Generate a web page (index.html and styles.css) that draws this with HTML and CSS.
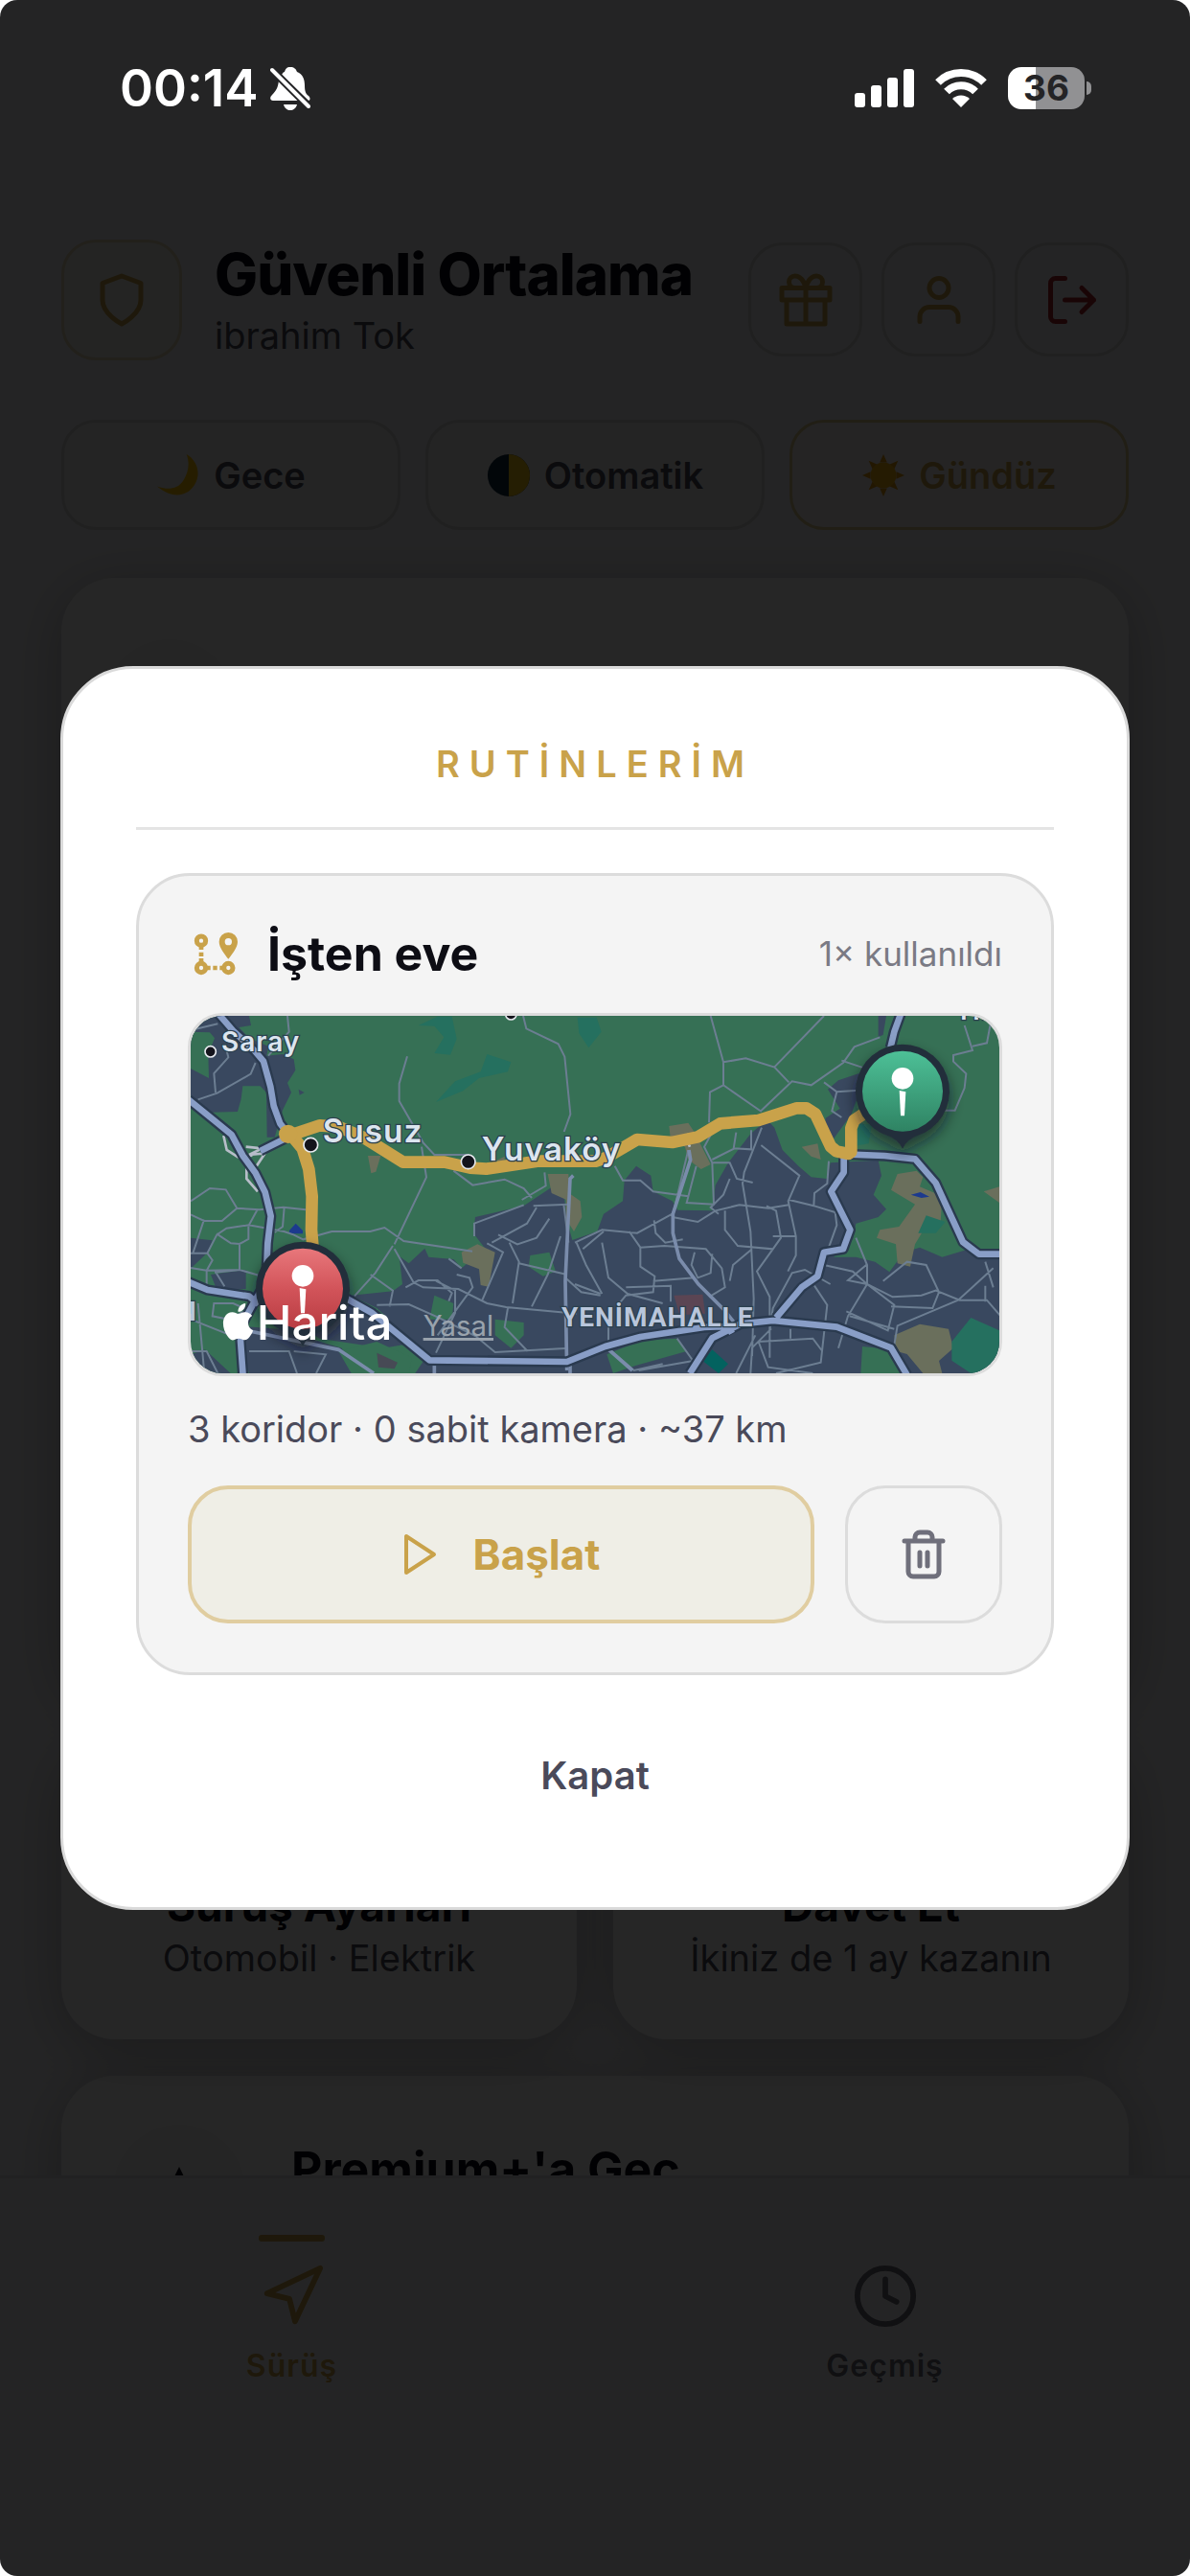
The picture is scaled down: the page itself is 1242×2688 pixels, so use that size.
FILE: index.html
```html
<!DOCTYPE html>
<html lang="tr">

<head>
    <meta charset="UTF-8">
    <meta name="viewport" content="width=device-width, initial-scale=1.0">
    <title>Güvenli Ortalama</title>
    <link rel="stylesheet" href="styles.css">
</head>

<body>
<div class="screen">
    <div class="status">
        <span class="time">00:14</span>
        <svg class="bell" viewBox="0 0 42 46" fill="#fff">
            <path d="M21 1c4 0 6 2 7 5 6 2 8 8 8 14 0 6 1 9 4 11 2 2 2 4 0 5L12 9c1-2 2-3 3-3 1-3 2-5 6-5zM9 15l22 21H3c-3 0-4-3-1-6 4-4 6-7 7-15zM14 40h14c-1 4-4 6-7 6s-6-2-7-6z"/>
            <path d="M2 4l38 38" stroke="#242426" stroke-width="8"/>
            <path d="M2 4l38 38" stroke="#fff" stroke-width="4" stroke-linecap="round"/>
        </svg>
        <svg class="signal" viewBox="0 0 62 40" fill="#fff">
            <rect x="0" y="25" width="11" height="15" rx="3"/>
            <rect x="17" y="17" width="11" height="23" rx="3"/>
            <rect x="34" y="9" width="11" height="31" rx="3"/>
            <rect x="51" y="0" width="11" height="40" rx="3"/>
        </svg>
        <svg class="wifi" viewBox="0 0 54 40" fill="none">
            <path d="M3 14a34 34 0 0 1 48 0M12 23.500a21 21 0 0 1 30 0" stroke="#fff" stroke-width="8"/>
            <path d="M27 40l-9-9a13 13 0 0 1 18 0z" fill="#fff"/>
        </svg>
        <div class="battery"><span>36</span></div>
    </div>

    <main class="content">
        <header>
            <div class="logo">
                <svg viewBox="0 0 24 24"><path d="M12 22s8-4 8-10V5l-8-3-8 3v7c0 6 8 10 8 10z"/></svg>
            </div>
            <div class="brand">
                <h1>Güvenli Ortalama</h1>
                <p>ibrahim Tok</p>
            </div>
            <div class="actions">
                <button type="button" aria-label="Hediye">
                    <svg viewBox="0 0 24 24"><path d="M20 12v10H4V12M2 7h20v5H2zM12 22V7M12 7H7.500a2.500 2.500 0 1 1 0-5C11 2 12 7 12 7zM12 7h4.500a2.500 2.500 0 1 0 0-5C13 2 12 7 12 7z"/></svg>
                </button>
                <button type="button" aria-label="Profil">
                    <svg viewBox="0 0 24 24"><path d="M20 21v-2a4 4 0 0 0-4-4H8a4 4 0 0 0-4 4v2"/><circle cx="12" cy="7" r="4"/></svg>
                </button>
                <button type="button" class="logout" aria-label="Çıkış">
                    <svg viewBox="0 0 24 24"><path d="M9 21H5a2 2 0 0 1-2-2V5a2 2 0 0 1 2-2h4M16 17l5-5-5-5M21 12H9"/></svg>
                </button>
            </div>
        </header>

        <div class="themes">
            <button type="button">
                <svg viewBox="0 0 48 48"><path d="M33 1c12 7 16 21 9 33S19 51 1 36c13 5 24 2 29-7s7-18 3-28z" fill="#ffc400"/></svg>
                Gece
            </button>
            <button type="button">
                <svg viewBox="0 0 48 48"><circle cx="24" cy="24" r="23" fill="#10283c"/><path d="M24 1a23 23 0 0 1 0 46z" fill="#f5c518"/></svg>
                Otomatik
            </button>
            <button type="button" class="active">
                <svg viewBox="0 0 48 48"><path d="M24 1l4 9h-8zM24 47l4-9h-8zM1 24l9-4v8zM47 24l-9-4v8zM8 8l9 4-5 5zM40 8l-9 4 5 5zM8 40l9-4-5-5zM40 40l-9-4 5-5z" fill="#e59a10"/><circle cx="24" cy="24" r="14" fill="#f7b512"/></svg>
                Gündüz
            </button>
        </div>

        <section class="hero"><span class="dot"></span></section>

        <div class="tiles">
            <section class="tile">
                <h2>Sürüş Ayarları</h2>
                <p>Otomobil · Elektrik</p>
            </section>
            <section class="tile">
                <h2>Davet Et</h2>
                <p>İkiniz de 1 ay kazanın</p>
            </section>
        </div>

        <section class="premium">
            <span class="dot">
                <svg viewBox="0 0 24 24"><path d="M12 2l3.100 6.300 6.900 1-5 4.900 1.200 6.800-6.200-3.200L5.800 21 7 14.200 2 9.300l6.900-1z" fill="#0d0d14"/></svg>
            </span>
            <h2>Premium+'a Geç</h2>
        </section>
    </main>

    <nav class="tabs">
        <a href="#" class="active">
            <svg viewBox="0 0 24 24"><path d="M3 11l19-9-9 19-2-8z"/></svg>
            Sürüş
        </a>
        <a href="#">
            <svg viewBox="0 0 24 24"><circle cx="12" cy="12" r="10"/><path d="M12 6v6l4 2"/></svg>
            Geçmiş
        </a>
    </nav>

    <div class="overlay">
        <div class="modal" role="dialog" aria-labelledby="modal-title">
            <h2 id="modal-title">RUTİNLERİM</h2>

            <article class="routine">
                <div class="routine-head">
                    <svg viewBox="66 126 144 138" fill="none" stroke="#c9a24a">
                        <circle cx="90" cy="155" r="14" stroke-width="15"/>
                        <circle cx="90" cy="240" r="14" stroke-width="15"/>
                        <circle cx="175" cy="240" r="14" stroke-width="15"/>
                        <path d="M90 170v13M90 191v13M90 210v12M106 240h13M127 240h13M148 240h13" stroke-width="14"/>
                        <path d="M175 129a29 29 0 0 1 29 29c0 18-18 40-29 54-11-14-29-36-29-54a29 29 0 0 1 29-29zm0 18a11 11 0 1 0 0 22 11 11 0 0 0 0-22z" fill="#c9a24a" fill-rule="evenodd" stroke="none"/>
                    </svg>
                    <h3>İşten eve</h3>
                    <span>1× kullanıldı</span>
                </div>

                <div class="map">
                    <svg viewBox="57 60 2532 1119" preserveAspectRatio="xMidYMid slice">
                        <defs>
                            <linearGradient id="red" x1="0" y1="0" x2="0" y2="1">
                                <stop offset="0" stop-color="#e8777b"/>
                                <stop offset=".5" stop-color="#d2545a"/>
                                <stop offset="1" stop-color="#b83c42"/>
                            </linearGradient>
                            <linearGradient id="green" x1="0" y1="0" x2="0" y2="1">
                                <stop offset="0" stop-color="#4dc097"/>
                                <stop offset="1" stop-color="#2f8363"/>
                            </linearGradient>
                            <filter id="shadow" x="-50%" y="-50%" width="200%" height="200%">
                                <feDropShadow dx="0" dy="24" stdDeviation="22" flood-color="#101820" flood-opacity=".6"/>
                            </filter>
                        </defs>
                        <rect x="57" y="60" width="2532" height="1119" fill="#367055"/>

                        <!-- built-up areas -->
                        <g fill="#39485f">
                            <path d="M57 60H240L246 90 208 96 240 130 300 155 295 185 345 180 380 196 385 230 360 270 372 300 345 355 320 440H296L294 300 275 280H220L215 320 204 360 120 362 57 310z"/>
                            <path d="M395 290l18 10-15 8zM57 755l68 8-15 38-53 50zM120 870l110-15v60l-90 5zM57 1120l45-15 80 74H57zM190 1030l140 10 200 60 40 79H240zM300 960l220 0 150 40 110 80-120 20-200-30z"/>
                            <path d="M710 812L740 835 790 788 802 815 880 822 905 850 980 790 942 740 948 690 1100 655 1200 588 1226 620 1235 700 1252 762 1330 735 1350 680 1410 640 1415 575 1452 530 1498 560 1505 610 1565 640 1582 668 1690 670 1700 590 1740 520 1810 430 1862 385 1885 410 1910 480 1960 530 2000 565 2050 570 2060 520 2210 512 2220 560 2195 620 2235 665 2210 690 2140 710 2130 760 2070 815 2140 815 2200 830 2245 862 2290 800 2340 785 2410 815 2510 785 2589 800V1179H760L800 1120 640 975 560 935 690 922 720 900z"/>
                            <path d="M2052 290L2085 262 2150 240V300L2125 370 2070 445 2040 440 2045 380 2090 350zM2235 60l-10 60-15 5V60z"/>
                        </g>
                        <g fill="#367055">
                            <path d="M57 110l60 2 15 18-20 50 2 75-57-30zM820 935l60 25-5 50-70 0zM1010 1010l90 10 0 40-40 40-50-40zM1120 810l60-10 20 60-40 15-45-30zM1360 1120l110-45 110-5 30 40-160 45-70 24zM2160 1095l100 10 45 74H2155zM520 1110l120-30 110 50-10 49H560z"/>
                        </g>
                        <g fill="#6a6f5c">
                            <path d="M612 498l40 0-15 50-15 5zM905 800l50-25 55 25-20 108-25-5-5-50-50-20zM1175 555h65l2 60 35 25 5 50-25 45-25-40v-60l-45-20zM1555 405l60-10 20 30 50 100-30 15-40-30-10-40-45-20zM2250 605l20-50 60-10 20 20-10 30 70 30-5 80-50 20-30 50-15 70-40-10-5-60-60-20 10-25 60-10 50-70zM2260 1060l80-35 90 15 15 60-45 40 10 39h-60l-50-60-35-10zM2540 610l49-15v50zM1970 470l50-10 10 50-30-10zM1000 520l40-20 0 30z"/>
                        </g>
                        <path d="M1570 935l90-3 8 60-80 5z" fill="#5b4553"/>
                        <path d="M640 1115l65 30-10 20-50-5z" fill="#474a55"/>
                        <g fill="#25705f">
                            <path d="M770 90l60-28h45l15 70-20 50-50-5 30-50-30-35zM825 330l60-65 80-30 20-55 75 25-10 30-90 20-50 40zM1268 65l60 0 15 45-40 50-30-45zM2120 400l70 0-10 60-60 10zM2335 740l25-55 60 20-30 35zM2440 1080l60-75 89 40v134H2500l-60-40z"/>
                        </g>
                        <path d="M1660 1140l30-35 50 45-30 29z" fill="#03625f"/>
                        <path d="M366 732l20-22 22 22v10h-42zM2312 620l30-8 28 14-25 4z" fill="#1c3a8e"/>

                        <!-- side streets -->
                        <g fill="none" stroke="#6c7e92" stroke-width="6">
                            <path d="M80 322l60-20 105-60 15-35M135 300l-5-60 45-50-5-20M57 105l85-20M360 60l5 50-65 75M735 187l-25 85v55l75 130 35 38h110M1098 60l10 40 100 48 20 40 18 180-20 55M57 640l60-40 50 4 35 58-47 40H99l-42-20M99 698l-35 105h-7M202 662l70 5 75-8 70 8M350 660l-5 60-25 18M265 668l-27 50M57 803h52l30-58 30-20 70-10 110 20 30 10 30 15 90-25h120l45-12 60 42 215 32M109 803l16 22-18 32v60M107 857l-50-8M138 742l45 30 27 2 28-15v-40M210 775v80l-78 8M135 862l28 45M107 857l103-2 70 20M620 870l70 50-10 50M695 775l100-210-15-95M1125 630l-25-30-60-28-100 18-60-45M1165 550l4 42-75 44M945 750v-40l155-58M1130 655l110-5M1240 770l-15-120M690 780l-55 85-65 72M695 790l60 105 30 15 110 5 90 45 60 12 220 20M825 890l60 30v70l-60 125M730 910l40-22h60l45 40-10 25M905 850l-40-30M640 965l100-2 90 40 120 60 60 50 220-12M890 870l40 10 10 30-110 150M970 950l65-150-50-28M1000 770l110-60 30-50M1055 770l30 60-20 130M1020 745l60 30 60-20 40-60M1085 835l150 35M1215 750l-40 120-50 100M1265 770l30 70 50 90M1230 880l50 45 60 10M1285 790l65-55M380 1110l100 10-30 59M240 1110h125l25 69M57 1010l150 60M130 960l60 0 45 20-60 30-50-10zM80 960l20 220M57 1110l50 0 35 69M1050 975l-10 60 72 75"/>
                            <path d="M1685 60l40 145v72l115 80M1725 205l70-12 90 28 45 47M1885 220l155-160M1840 360l100-95 60 12 100-70 35-50 80-30M1725 277l-42 22-3 95M2040 268l40 30 70-5M2080 298l-15 60 30 20M2095 200l90 30M2480 90l25 78-60 15v20l40 38-5 45-30 70h-40M2505 155l45-10 15-80M1385 530l25 45h55l40 35 110 15M1615 480l-50 210M1640 530l-30 115 85 5-5-130-25-50 30-55M1690 520h55l22 50 50 12M1757 475l55 3 0-60M1757 475l8-50M1690 510l70-35M1845 410l-35 90-20 50-5 35 25 150 10 210-5 180M1843 465l120 95-35 80 24 110v60l-25 50M1928 635l80 20 2-40 40-30 5-70M2010 655l65 20 5 40-25 70M1565 690l80 15 55-35 75-18 90 10 65-10M1730 670v60l40 50 110 10 25-35-15-85-30-15M1710 680l-25-20 40-40 20-50M1260 770l85-40 110 10 110-60M1430 735l35 50v60l45 30-5 50-85 10-25 30M1508 700l5 40 30 30 55-10M1465 785l75-5 130 10 50 60 10 60-50 30M1635 800l-10 40 20 40 40-15 5-60M1880 790l-50 70 40 80v190M1950 750h-70M1815 790l-60 50-10 50M1505 890l130-10M1420 910l140-5 0 50M2060 900l-80-45-40 10-60 110-10 70M2010 905l40 60-20 180-140 34M2140 755l35 85v60l-60 100-30 100M2040 840l90 20 45 40 80 40 90-5 45-15 75 30h85l43 50M2175 900l-60-12 60-50M2110 985l130 60 20-80-85-65M2250 970l130 5 20-50-40-85-60-10-75 60M2260 1090l10-60 190-80 110-100M2545 830l25 80M2545 905v50M2120 1000l140 40M1825 1060l-60 119M1835 1080l170-10 30 40M1935 1040v30M1835 1080l30 80 140 19M1810 1179l5-80 60-60M1345 770l20 110 60 50 110 30M1260 900l80 30M1365 1100l80 70 90-20M1580 1070l50 70-170 30M1365 1030v60"/>
                        </g>
                        <g fill="none" stroke="#7a8cab" stroke-width="11">
                            <path d="M1255 560l-10 10-15 320 5 280M1617 480l5 30-55 170 0 60 20 80 60 80 80 80 40 50"/>
                            <path d="M210 1040l310 65 110 74M1360 1100l80 70M820 1179v-40M1245 1179v-30"/>
                        </g>
                        <path d="M160 435l10 45 35 22 45-5M230 470l50 5-40 20 50-5-30 45-28 0v35l35 40M1620 470l-15-35 15-5M600 970l40 15" fill="none" stroke="#b7bdc9" stroke-width="8"/>

                        <!-- motorways, dark casing under a light line -->
                        <g fill="none" stroke="#2a3a4f" stroke-width="34" stroke-linejoin="round">
                            <path d="M145 55l45 52 65 60 30 35 22 80 10 60 20 55 35 45M50 322l80 65 55 45 35 65 40 55 30 60 18 75-10 85-5 120-35 60-35 65-10 60 8 110M50 893l60 25 130 20 30 25M275 483l80-40M545 945l80 45 180 148 430 5 120-48 110-30 200-30 75-3 12 22M1620 1179l70-110 90-45 100-10 200 20 170 65 50 85M1890 1005l80-95 50-35 20-75 60-10 22-60-60-120 40-60v-60M2100 493l130 5 95 10 65 75 85 185 50 38h70M2280 55l-20 55-12 50"/>
                        </g>
                        <g fill="none" stroke="#899ec7" stroke-width="20" stroke-linejoin="round">
                            <path d="M145 55l45 52 65 60 30 35 22 80 10 60 20 55 35 45M50 322l80 65 55 45 35 65 40 55 30 60 18 75-10 85-5 120-35 60-35 65-10 60 8 110M50 893l60 25 130 20 30 25M275 483l80-40M545 945l80 45 180 148 430 5 120-48 110-30 200-30 75-3 12 22M1620 1179l70-110 90-45 100-10 200 20 170 65 50 85M1890 1005l80-95 50-35 20-75 60-10 22-60-60-120 40-60v-60M2100 493l130 5 95 10 65 75 85 185 50 38h70M2280 55l-20 55-12 50"/>
                        </g>

                        <!-- route -->
                        <path d="M440 790l-5-60 2-105-10-85-20-65-35-42 90-30 60 5 80 35 120 75h130l80 18 50 3 160-24h183l35-12 95-56 110 9 80-17 70-42 120-10 120-38 30 0 28 18 48 102 18 15 38 8 8-6v-75l10-25 45-30 30-65" fill="none" stroke="#c9a24a" stroke-width="38" stroke-linejoin="round"/>
                        <circle cx="362" cy="430" r="29" fill="#c9a24a"/>

                        <g fill="#14141c" stroke="#e6e9ee" stroke-width="5">
                            <circle cx="119" cy="172" r="17"/>
                            <circle cx="433" cy="464" r="22"/>
                            <circle cx="926" cy="517" r="22"/>
                            <circle cx="1060" cy="55" r="17"/>
                        </g>

                        <g filter="url(#shadow)">
                            <path d="M408 767a147 147 0 0 1 45 287q-30 10-45 40-15-30-45-40a147 147 0 0 1 45-287z" fill="#232f3a"/>
                            <path d="M2286 149a147 147 0 0 1 45 287q-30 10-45 40-15-30-45-40a147 147 0 0 1 45-287z" fill="#232f3a"/>
                        </g>
                        <circle cx="408" cy="914" r="126" fill="url(#red)"/>
                        <circle cx="2286" cy="296" r="126" fill="url(#green)"/>
                        <g fill="#fff">
                            <circle cx="408" cy="874" r="34"/>
                            <path d="M398 912l20 4-4 75h-12z"/>
                            <circle cx="2286" cy="256" r="34"/>
                            <path d="M2276 294l20 4-4 75h-12z"/>
                        </g>

                        <g class="places">
                            <text x="153" y="170" font-size="84">Saray</text>
                            <text x="470" y="457" font-size="100">Susuz</text>
                            <text x="968" y="512" font-size="100">Yuvaköy</text>
                            <text x="2466" y="72" font-size="84">Hı</text>
                            <text class="district" x="1218" y="1033" font-size="84">YENİMAHALLE</text>
                            <text class="district" x="15" y="1015" font-size="84">N</text>
                        </g>
                        <path transform="translate(148 960) scale(4.800)" fill="#fff" d="M12.152 6.896c-.948 0-2.415-1.078-3.960-1.040-2.040.027-3.910 1.183-4.961 3.014-2.117 3.675-.546 9.103 1.519 12.090 1.013 1.454 2.208 3.090 3.792 3.039 1.520-.065 2.090-.987 3.935-.987 1.831 0 2.350.987 3.960.948 1.637-.026 2.676-1.480 3.676-2.948 1.156-1.688 1.636-3.325 1.662-3.415-.039-.013-3.182-1.221-3.220-4.857-.026-3.040 2.480-4.494 2.597-4.559-1.429-2.090-3.623-2.324-4.390-2.376-2-.156-3.675 1.090-4.610 1.090zM15.530 3.830c.843-1.012 1.400-2.427 1.245-3.830-1.207.052-2.662.805-3.532 1.818-.780.896-1.454 2.338-1.273 3.714 1.338.104 2.715-.688 3.559-1.701"/>
                        <text class="maps-name" x="263" y="1075" font-size="148">Harita</text>
                        <a href="#"><text class="legal" x="785" y="1062" font-size="88">Yasal</text></a>
                    </svg>
                </div>

                <p class="meta">3 koridor · 0 sabit kamera · ~37 km</p>

                <div class="buttons">
                    <button type="button" class="start">
                        <svg viewBox="0 0 40 48"><path d="M4 5v38l29-19z"/></svg>
                        Başlat
                    </button>
                    <button type="button" class="delete" aria-label="Sil">
                        <svg viewBox="0 0 48 54"><path d="M4 13h40M8 13v32a5 5 0 0 0 5 5h22a5 5 0 0 0 5-5V13M15 13V9a5 5 0 0 1 5-5h8a5 5 0 0 1 5 5v4M20 25v14M28 25v14"/></svg>
                    </button>
                </div>
            </article>

            <button type="button" class="close">Kapat</button>
        </div>
    </div>
</div>
</body>

</html>
```
FILE: styles.css
```css
* {
    box-sizing: border-box;
}

body {
    margin: 0;
    background: #fff;
    font-family: Inter, 'Open Sans', Arial, sans-serif;
    color: #0d0d14;
}

h1, h2, h3, p {
    margin: 0;
}

button {
    font: inherit;
    padding: 0;
    cursor: pointer;
}

svg {
    display: block;
    flex: none;
}

.screen {
    position: relative;
    display: flex;
    flex-direction: column;
    height: 100vh;
    overflow: hidden;
    border-radius: 18px;
    background: #f2f2f7;
}

/* status bar, stays above the dimmed screen */
.status {
    position: absolute;
    top: 0;
    left: 0;
    right: 0;
    z-index: 3;
    display: flex;
    align-items: center;
    height: 184px;
    padding: 0 110px 0 125px;
    color: #fff;
}

.time {
    font-size: 53px;
    font-weight: 600;
}

.bell {
    width: 42px;
    height: 46px;
    margin-left: 12px;
}

.signal {
    width: 62px;
    height: 40px;
    margin-left: auto;
}

.wifi {
    width: 54px;
    height: 40px;
    margin: 0 22px;
}

.battery {
    position: relative;
    width: 80px;
    height: 44px;
    border-radius: 14px;
    background: linear-gradient(90deg, #fff 36%, #919193 36%);
    color: #242426;
    font-size: 37px;
    font-weight: 700;
    line-height: 44px;
    text-align: center;
}

.battery::after {
    content: '';
    position: absolute;
    top: 15px;
    right: -7px;
    width: 5px;
    height: 14px;
    border-radius: 0 5px 5px 0;
    background: #919193;
}

/* home */
.content {
    flex: 1;
    min-height: 0;
    overflow: hidden;
    padding: 249px 64px 0;
}

header {
    display: flex;
    align-items: center;
    height: 127px;
}

.logo,
.actions button {
    display: flex;
    align-items: center;
    justify-content: center;
    border: 3px solid #d4d4d4;
    border-radius: 36px;
    background: #f2f2f4;
}

.logo {
    width: 126px;
    height: 126px;
    border-color: #e0d6b4;
    background: #eeeee8;
}

.logo svg,
.actions svg {
    width: 60px;
    height: 60px;
    fill: none;
    stroke: #c9a24a;
    stroke-width: 2;
    stroke-linecap: round;
    stroke-linejoin: round;
}

.brand {
    flex: 1;
    padding-left: 34px;
}

.brand h1 {
    font-size: 60px;
    font-weight: 800;
    line-height: 74px;
    letter-spacing: -1px;
    white-space: nowrap;
}

.brand p {
    font-size: 38px;
    line-height: 54px;
    color: #4a4a5a;
}

.actions {
    display: flex;
    gap: 20px;
}

.actions button {
    width: 119px;
    height: 119px;
}

.actions .logout svg {
    stroke: #a8242c;
}

.themes {
    display: grid;
    grid-template-columns: repeat(3, 1fr);
    gap: 26px;
    margin: 62px 0 50px;
}

.themes button {
    display: flex;
    align-items: center;
    justify-content: center;
    gap: 14px;
    height: 115px;
    border: 3px solid #d4d4d4;
    border-radius: 36px;
    background: #eeeeef;
    color: #4a4a5a;
    font-size: 38px;
    font-weight: 600;
}

.themes svg {
    width: 46px;
    height: 46px;
}

.themes .active {
    border-color: #dcc88c;
    background: #f4f0ee;
    color: #c9a24a;
}

.hero,
.tile,
.premium {
    border-radius: 56px;
    background: #fff;
    box-shadow: 0 10px 60px rgba(0, 0, 0, .25);
}

.dot {
    display: flex;
    align-items: center;
    justify-content: center;
    width: 138px;
    height: 138px;
    border-radius: 50%;
    background: #f4f4f4;
}

.hero {
    height: 1175px;
    padding: 64px 44px;
}

.tiles {
    display: grid;
    grid-template-columns: 1fr 1fr;
    gap: 38px;
    margin: 38px 0;
}

.tile {
    padding: 144px 20px 58px;
    text-align: center;
}

.tile h2 {
    font-size: 46px;
    font-weight: 700;
    line-height: 56px;
}

.tile p {
    font-size: 38px;
    line-height: 54px;
    color: #4a4a5a;
}

.premium {
    display: flex;
    gap: 48px;
    padding: 51px 54px;
}

.premium svg {
    width: 60px;
    height: 60px;
}

.premium h2 {
    padding-top: 16px;
    font-size: 50px;
    font-weight: 700;
    line-height: 60px;
}

.tabs {
    display: flex;
    gap: 10px;
    height: 418px;
    padding: 59px 14px 0 0;
    border-top: 3px solid #dcdce0;
}

.tabs a {
    flex: 1;
    display: flex;
    flex-direction: column;
    align-items: center;
    color: #6e6e7a;
    font-size: 32px;
    font-weight: 600;
    letter-spacing: 1px;
    line-height: 40px;
    text-decoration: none;
}

.tabs a::before {
    content: '';
    width: 69px;
    height: 7px;
    margin-bottom: 22px;
    border-radius: 3px;
}

.tabs .active {
    color: #c9a24a;
}

.tabs .active::before {
    background: #c9a24a;
}

.tabs svg {
    width: 70px;
    height: 70px;
    margin-bottom: 18px;
    fill: none;
    stroke: currentColor;
    stroke-width: 2;
    stroke-linecap: round;
    stroke-linejoin: round;
}

/* routines dialog */
.overlay {
    position: absolute;
    inset: 0;
    z-index: 2;
    display: flex;
    align-items: center;
    justify-content: center;
    padding: 0 63px;
    background: rgba(0, 0, 0, .85);
}

.modal {
    flex: 1;
    padding: 76px 76px 66px;
    border: 3px solid #dadada;
    border-radius: 76px;
    background: #fff;
}

.modal > h2 {
    margin-bottom: 45px;
    padding-bottom: 43px;
    border-bottom: 3px solid #e4e4e4;
    color: #c9a24a;
    font-size: 38px;
    font-weight: 600;
    letter-spacing: 10px;
    line-height: 46px;
    text-align: center;
}

.routine {
    padding: 51px;
    border: 3px solid #dcdcdc;
    border-radius: 56px;
    background: #f4f4f4;
}

.routine-head {
    display: flex;
    align-items: center;
    height: 60px;
    margin-bottom: 32px;
}

.routine-head svg {
    width: 48px;
    height: 46px;
    margin: 0 29px 0 6px;
}

.routine-head h3 {
    flex: 1;
    font-size: 50px;
    font-weight: 700;
}

.routine-head span {
    color: #7a7a84;
    font-size: 35px;
}

.map {
    height: 379px;
    overflow: hidden;
    border: 3px solid #dcdcdc;
    border-radius: 36px;
}

.map svg {
    width: 100%;
    height: 100%;
}

.places text {
    fill: #dce5ef;
    stroke: #2c4150;
    stroke-width: 8px;
    paint-order: stroke;
    font-weight: 600;
    letter-spacing: 3px;
}

.places .district {
    fill: #b9c6db;
    font-family: Roboto, sans-serif;
    font-weight: 700;
}

.maps-name {
    fill: #fff;
    font-weight: 500;
}

.legal {
    fill: #99a3ad;
    text-decoration: underline;
}

.meta {
    margin: 32px 0 36px;
    color: #4a4a5a;
    font-size: 38px;
    line-height: 46px;
}

.buttons {
    display: flex;
    gap: 32px;
}

.buttons button {
    display: flex;
    align-items: center;
    justify-content: center;
    height: 144px;
    border: 3px solid #dcdcdc;
    border-radius: 42px;
    background: none;
}

.buttons svg {
    fill: none;
    stroke: currentColor;
    stroke-width: 4;
    stroke-linecap: round;
    stroke-linejoin: round;
}

.buttons .start {
    flex: 1;
    gap: 34px;
    border: 4px solid #e0cda0;
    background: #efeee6;
    color: #c9a24a;
    font-size: 44px;
    font-weight: 700;
}

.start svg {
    width: 40px;
    height: 48px;
}

.buttons .delete {
    width: 164px;
    color: #6f6f7b;
}

.delete svg {
    width: 48px;
    height: 54px;
    stroke-width: 5;
}

.close {
    display: block;
    width: 100%;
    height: 144px;
    margin-top: 32px;
    border: 0;
    background: none;
    color: #4a4a5a;
    font-size: 40px;
    font-weight: 600;
}
```
